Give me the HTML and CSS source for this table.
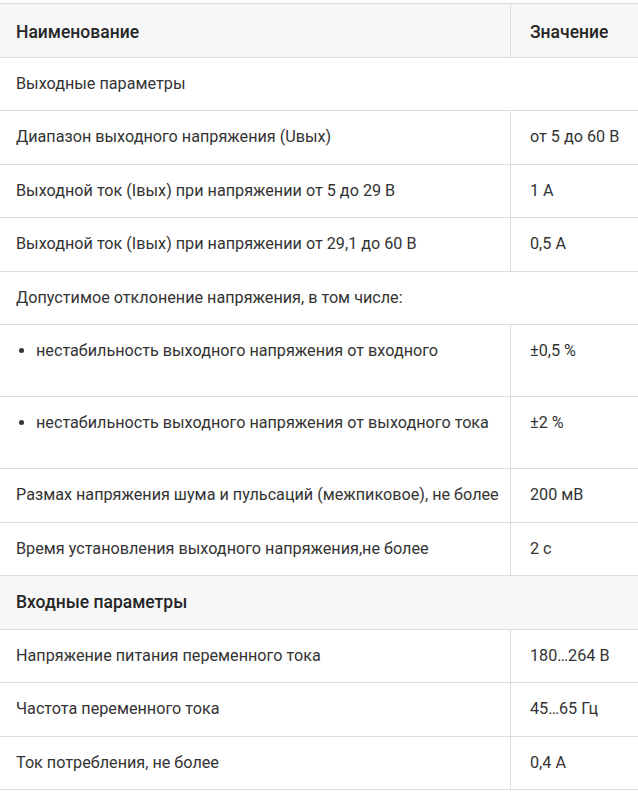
FILE: index.html
```html
<!DOCTYPE html>
<html lang="ru">
<head>
<meta charset="utf-8">
<link rel="stylesheet" href="styles.css">
</head>
<body>
<table class="spec">
  <thead>
    <tr><th class="name">Наименование</th><th class="val">Значение</th></tr>
  </thead>
  <tbody>
    <tr><td colspan="2" class="name">Выходные параметры</td></tr>
    <tr><td class="name">Диапазон выходного напряжения (Uвых)</td><td class="val">от 5 до 60 В</td></tr>
    <tr><td class="name">Выходной ток (Iвых) при напряжении от 5 до 29 В</td><td class="val">1 А</td></tr>
    <tr><td class="name">Выходной ток (Iвых) при напряжении от 29,1 до 60 В</td><td class="val">0,5 А</td></tr>
    <tr><td colspan="2" class="name">Допустимое отклонение напряжения, в том числе:</td></tr>
    <tr class="top"><td class="name"><ul class="bl"><li>нестабильность выходного напряжения от входного</li></ul></td><td class="val">±0,5 %</td></tr>
    <tr class="top"><td class="name"><ul class="bl"><li>нестабильность выходного напряжения от выходного тока</li></ul></td><td class="val">±2 %</td></tr>
    <tr><td class="name">Размах напряжения шума и пульсаций (межпиковое), не более</td><td class="val">200 мВ</td></tr>
    <tr><td class="name">Время установления выходного напряжения,не более</td><td class="val">2 с</td></tr>
    <tr class="group"><th colspan="2" class="name">Входные параметры</th></tr>
    <tr><td class="name">Напряжение питания переменного тока</td><td class="val">180…264 В</td></tr>
    <tr><td class="name">Частота переменного тока</td><td class="val">45…65 Гц</td></tr>
    <tr><td class="name">Ток потребления, не более</td><td class="val">0,4 А</td></tr>
  </tbody>
</table>
</body>
</html>
```
FILE: styles.css
```css
html, body {
  margin: 0;
  padding: 0;
  background: #fff;
}
body {
  padding-top: 3px;
  font-family: Roboto, "Noto Sans", sans-serif;
  color: #333;
  overflow: hidden;
}
.spec {
  border-collapse: collapse;
  width: 638px;
  table-layout: fixed;
}
.spec th, .spec td {
  border-top: 1px solid #dcdcdc;
  border-bottom: 1px solid #dcdcdc;
  padding: 16px 0;
  line-height: 20.5px;
  font-size: 16.2px;
  font-weight: 400;
  text-align: left;
  vertical-align: middle;
  white-space: nowrap;
}
.spec .name {
  width: 494px;
  padding-left: 16px;
}
.spec .val {
  border-left: 1px solid #dcdcdc;
  padding-left: 19px;
}
.spec thead th, .spec .group th {
  background: #f7f7f7;
  font-weight: 500;
  font-size: 17.5px;
  color: #262626;
}
.spec thead th {
  padding-top: 18px;
  padding-bottom: 14px;
}
.spec tr.top td {
  vertical-align: top;
}
.bl {
  margin: 0 0 18.5px 0;
  padding: 0 0 0 20px;
}
```
